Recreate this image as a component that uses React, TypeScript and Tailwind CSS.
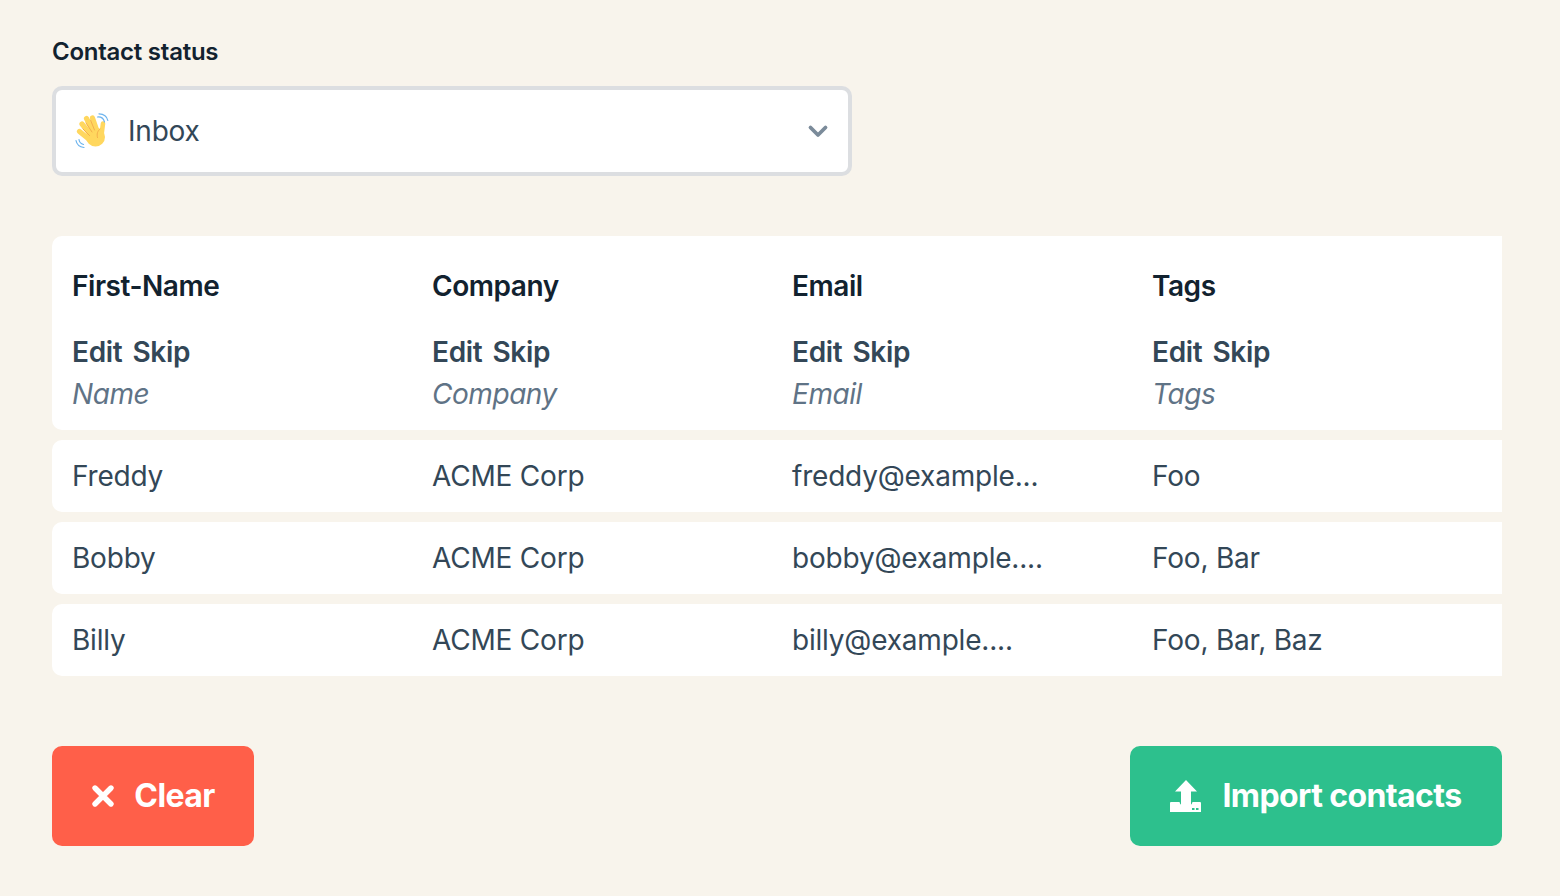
const columns = [
  { title: 'First-Name', field: 'Name' },
  { title: 'Company', field: 'Company' },
  { title: 'Email', field: 'Email' },
  { title: 'Tags', field: 'Tags' },
];

const rows = [
  ['Freddy', 'ACME Corp', 'freddy@example...', 'Foo'],
  ['Bobby', 'ACME Corp', 'bobby@example....', 'Foo, Bar'],
  ['Billy', 'ACME Corp', 'billy@example....', 'Foo, Bar, Baz'],
];

const WaveEmoji = () => (
  <svg className="w-[44px] h-[44px] shrink-0" viewBox="0 0 44 44" fill="none" strokeLinecap="round">
    <g stroke="#FFD75E" strokeWidth="5.2">
      <path d="M9.500 22.500L20 31" />
      <path d="M12 15L21 26" />
      <path d="M16.500 9.500L24 24" />
      <path d="M22.500 9L27 22" />
      <path d="M33 14.500L31.500 26" strokeWidth="4.600" />
    </g>
    <circle cx="25.500" cy="28" r="9.500" fill="#FFD75E" />
    <g stroke="#F2A94A" strokeWidth="0.9">
      <path d="M13 20l6.500 6.500" />
      <path d="M16 14l6 9" />
      <path d="M20.500 11l4 10" />
      <path d="M30 20c-2.500 2-3.500 5-2.500 8.500" />
    </g>
    <g stroke="#6DB4EE" strokeWidth="1.200">
      <path d="M27.500 8Q33 7.500 34.500 13" />
      <path d="M29 4.800Q36.500 5 37.800 11.500" />
      <path d="M9 30.500Q9.500 34.500 13.500 35.500" />
      <path d="M6 31.500Q7 37.500 14 38.500" />
    </g>
  </svg>
);

const ClearIcon = () => (
  <svg className="w-[24px] h-[24px] shrink-0" viewBox="0 0 24 24" fill="none" stroke="#fff" strokeWidth="5.400" strokeLinecap="round">
    <path d="M4 4l16 16M20 4L4 20" />
  </svg>
);

const ImportIcon = () => (
  <svg className="w-[32px] h-[32px] shrink-0" viewBox="0 0 32 32" fill="#fff">
    {/* tray with the two status dots cut out */}
    <path fillRule="evenodd" d="M1 22h29a1 1 0 011 1v9H0v-9a1 1 0 011-1zM22 28v2h2.500v-2zm4 0v2h2.500v-2z" />
    {/* thin notches either side of the arrow stem */}
    <path fill="#2dc08d" d="M9.500 21.500H11V24.500C10.200 24.300 9.700 23.200 9.500 21.500zM22.500 21.500H21V24.500C21.800 24.300 22.300 23.200 22.500 21.500z" />
    <path d="M16 0l11 11.500h-6V26h-10V11.500H5z" />
  </svg>
);

export default function App() {
  return (
    <div className="min-h-[896px] bg-[#f8f4ec] pl-[52px] pr-[58px] pt-[38px] font-['Inter',sans-serif] text-[#334757]">
      <div className="h-[28px] text-[24px] tracking-[-0.25px] leading-[28px] font-semibold text-[#12222f]">Contact status</div>

      <div className="mt-[20px] w-[800px] h-[90px] bg-white border-4 border-[#dcdee1] rounded-[10px] flex items-center pl-[14px] pr-[18px]">
        <WaveEmoji />
        <span className="ml-[14px] text-[28px] tracking-[-0.2px] leading-[36px]">Inbox</span>
        <svg className="ml-auto w-[24px] h-[24px] text-[#7b8b9a]" viewBox="0 0 24 24" fill="none" stroke="currentColor" strokeWidth="3.800" strokeLinecap="round" strokeLinejoin="round">
          <path d="M4.500 8.500L12 16l7.500-7.500" />
        </svg>
      </div>

      <div className="mt-[60px] flex flex-col gap-[10px]">
        <div className="h-[194px] bg-white rounded-l-[10px] grid grid-cols-[360px_360px_360px_370px] overflow-hidden">
          {columns.map((col) => (
            <div key={col.title} className="pl-[20px] pt-[30px]">
              <div className="text-[28px] tracking-[-0.45px] leading-[40px] font-semibold text-[#12222f]">{col.title}</div>
              <div className="mt-[26px] text-[28px] tracking-[-0.3px] leading-[40px] font-semibold flex gap-[10px]">
                <span>Edit</span>
                <span>Skip</span>
              </div>
              <div className="mt-[2px] text-[28px] tracking-[-0.45px] leading-[40px] italic text-[#5f7386]">{col.field}</div>
            </div>
          ))}
        </div>

        {rows.map((row) => (
          <div key={row[0]} className="h-[72px] bg-white rounded-l-[10px] grid grid-cols-[360px_360px_360px_370px] items-center">
            {row.map((cell) => (
              <div key={cell} className="pl-[20px] text-[28px] tracking-[-0.2px] leading-[40px] whitespace-nowrap">{cell}</div>
            ))}
          </div>
        ))}
      </div>

      <div className="mt-[70px] flex justify-between">
        <button className="h-[100px] w-[202px] rounded-[10px] bg-[#ff5f49] text-white flex items-center justify-center gap-[19px] text-[32px] tracking-[-0.6px] font-[650]">
          <ClearIcon />
          Clear
        </button>
        <button className="h-[100px] w-[372px] rounded-[10px] bg-[#2dc08d] text-white flex items-center justify-center gap-[20px] text-[32px] tracking-[-0.6px] font-[650]">
          <ImportIcon />
          Import contacts
        </button>
      </div>
    </div>
  );
}
